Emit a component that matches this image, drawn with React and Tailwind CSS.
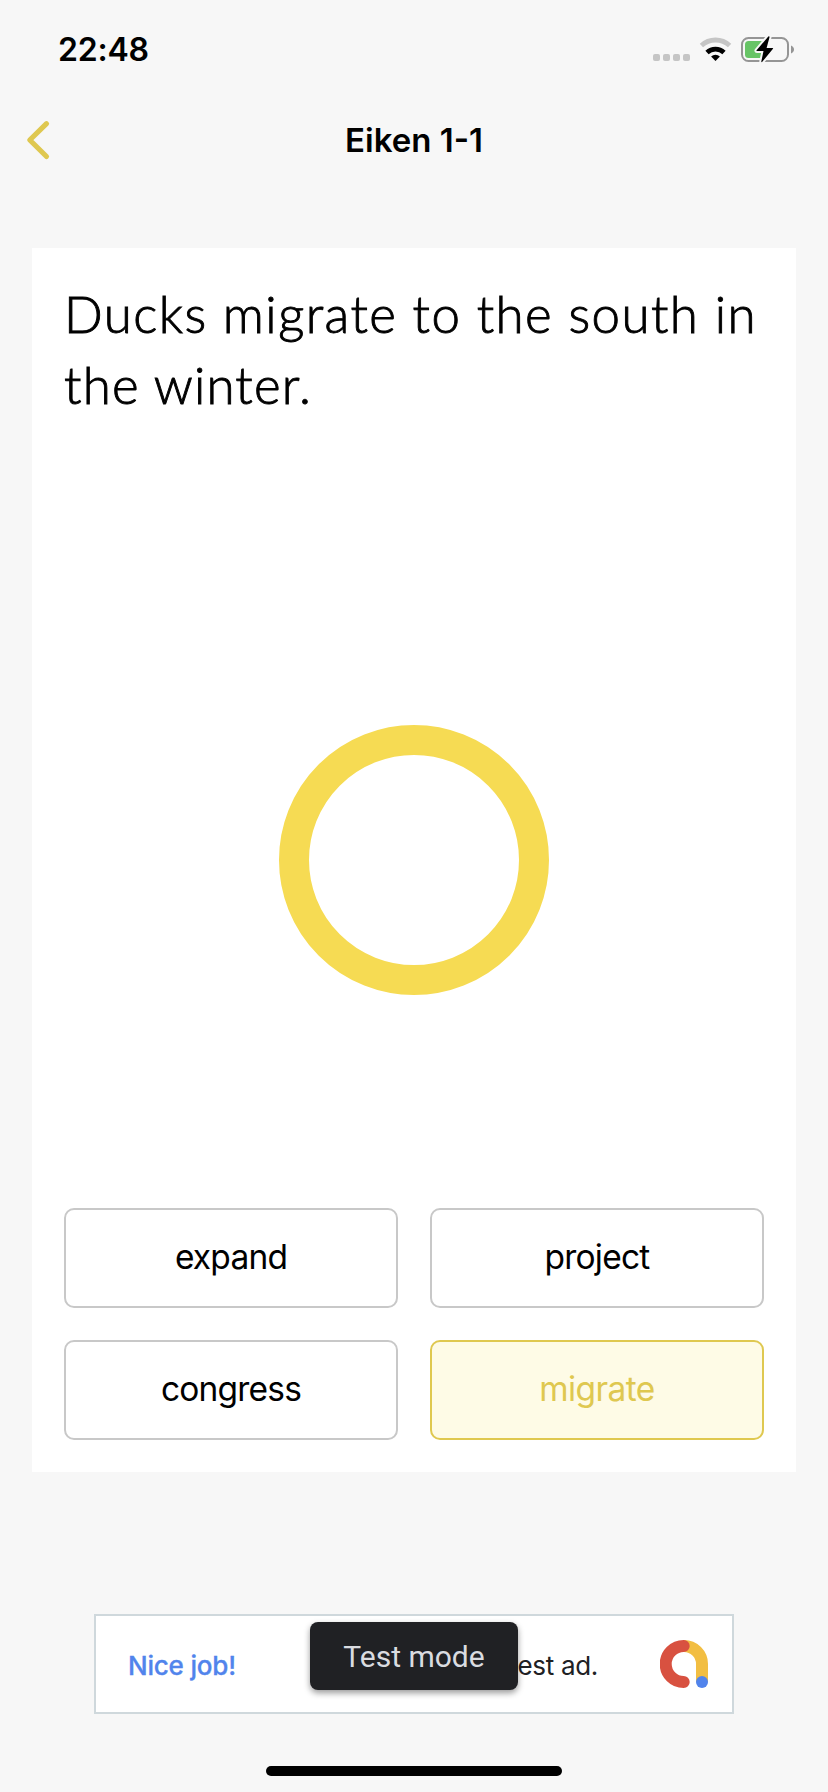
function StatusIcons() {
  return (
    <svg className="block h-[30px] w-[146px]" viewBox="651 34 146 30" fill="none">
      <g fill="#c5c5c5">
        <rect x="653" y="54" width="7" height="7" rx="2" />
        <rect x="663" y="54" width="7" height="7" rx="2" />
        <rect x="673" y="54" width="7" height="7" rx="2" />
        <rect x="683" y="54" width="7" height="7" rx="2" />
      </g>
      <path d="M701.4 45.6a20.6 20.6 0 0 1 28.2 0" stroke="#c5c5c5" strokeWidth="4.8" />
      <path d="M707 52.4a12.6 12.6 0 0 1 17 0" stroke="#000" strokeWidth="4.8" />
      <path d="M715.5 61l-4.4-4.5a6.6 6.6 0 0 1 8.8 0z" fill="#000" />
      <rect x="742" y="38" width="46" height="23" rx="6.5" stroke="#959595" strokeWidth="2" />
      <path d="M791 45.5c4 1.500 4 6.500 0 8z" fill="#959595" />
      <rect x="745" y="41" width="19" height="17" rx="3.500" fill="#67c466" />
      <path
        d="M768.300 36.600L756.600 50.200q-.5.900.5.900H763.500L761.300 61.500q0 1.200 1 .3L773 48.800q.5-.9-.5-.9H766.600L769.500 37.300q0-1.600-1.200-.7z"
        fill="#000"
        stroke="#f7f7f7"
        strokeWidth="4"
        paintOrder="stroke"
        strokeLinejoin="round"
      />
    </svg>
  );
}

function Answer({ children, selected }) {
  return (
    <button
      className={
        selected
          ? "flex h-[100px] items-center justify-center rounded-[10px] border-2 border-[#dfc850] bg-[#fefbe6] pb-px text-[33.5px] tracking-[-0.6px] text-[#dfc850]"
          : "flex h-[100px] items-center justify-center rounded-[10px] border-2 border-[#c8c8c8] bg-white pb-px text-[33.5px] tracking-[-0.8px] text-black"
      }
    >
      {children}
    </button>
  );
}

export default function App() {
  return (
    <div className="flex h-[1792px] w-[828px] flex-col overflow-hidden bg-[#f7f7f7] font-['Inter',sans-serif] text-black">
      <div className="flex h-[88px] items-start justify-between pt-[34px] pr-[31px] pl-[58px]">
        <span className="text-[32px] leading-[32px] font-semibold tracking-[-0.2px]">22:48</span>
        <StatusIcons />
      </div>

      <header className="grid h-[104px] grid-cols-3 items-center">
        <svg className="ml-[24px] h-[44px] w-[28px]" viewBox="24 118 28 44" fill="none">
          <path
            d="M46.500 123.700L29.800 140l16.700 16.500"
            stroke="#dfc850"
            strokeWidth="5.200"
            strokeLinecap="round"
            strokeLinejoin="round"
          />
        </svg>
        <h1 className="text-center text-[33px] leading-[40px] font-semibold">Eiken 1-1</h1>
      </header>

      <main className="mx-8 mt-[56px] flex h-[1224px] flex-col bg-white px-8 pt-[30px] pb-8">
        <p className="h-[144px] font-['Lato',sans-serif] text-[51px] leading-[71px] font-light whitespace-nowrap [-webkit-text-stroke:0.9px_black]">
          <span className="block tracking-[1.450px]">Ducks migrate to the south in</span>
          <span className="block tracking-[1.200px]">the winter.</span>
        </p>
        <div className="flex flex-1 items-start justify-center pt-[303px]">
          <div className="size-[270px] rounded-full border-[30px] border-[#f6db53]" />
        </div>
        <div className="grid grid-cols-2 gap-8">
          <Answer>expand</Answer>
          <Answer>project</Answer>
          <Answer>congress</Answer>
          <Answer selected>migrate</Answer>
        </div>
      </main>

      <section className="relative mx-auto mt-[142px] flex h-[100px] w-[640px] shrink-0 items-center border-2 border-[#cfd8dc] bg-white pr-[24px] pl-[32px]">
        <span className="pt-0.5 text-[26px] font-medium tracking-[-0.2px] text-[#5184ec] [-webkit-text-stroke:0.3px_#5184ec]">Nice job!</span>
        <span className="mr-[62px] ml-auto pt-0.5 text-[26px] tracking-[-0.3px] text-[#202124]">test ad.</span>
        <svg className="size-[48px]" viewBox="0 0 48 48" fill="none" strokeWidth="12">
          <path d="M24 6a18 18 0 0 1 18 18v18" stroke="#f2be42" />
          <path d="M23.700 6a18 18 0 0 0 0 36" stroke="#d85140" strokeLinecap="round" />
          <circle cx="42" cy="42" r="6" fill="#5184ec" />
        </svg>
        <div className="absolute top-[6px] left-[214px] flex h-[68px] w-[208px] items-center justify-center rounded-[8px] bg-[#202124] font-['Roboto',sans-serif] text-[30px] text-[#dadce0] shadow-[0_3px_6px_rgba(0,0,0,0.4)]">
          Test mode
        </div>
      </section>

      <div className="mx-auto mt-[52px] h-[10px] w-[296px] shrink-0 rounded-full bg-black" />
    </div>
  );
}
